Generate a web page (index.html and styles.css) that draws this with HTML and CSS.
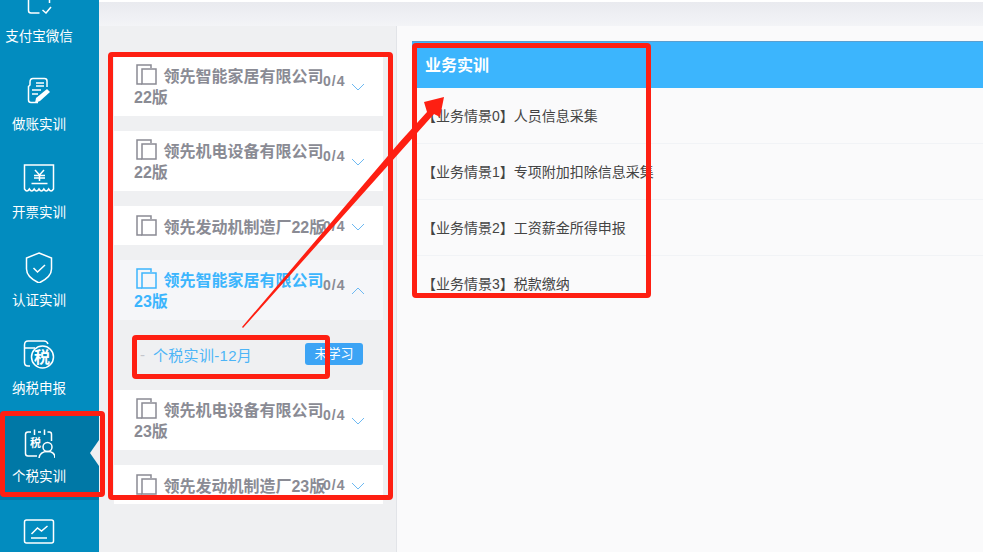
FILE: index.html
```html
<!DOCTYPE html>
<html lang="zh-CN">

<head>
    <meta charset="UTF-8">
    <title>个税实训</title>
    <link rel="stylesheet" href="styles.css">
</head>

<body>
    <div class="app">
        <nav class="side-nav">
            <div class="nav-item nav-first">
                <svg class="nav-icon" viewBox="0 0 32 32"><path d="M5.500 0v28.500q0 2.500 2.500 2.500h8.500M26.500 16v5M19.500 28l3.500 3 5-6"/></svg>
                <span>支付宝微信</span>
            </div>
            <div class="nav-item">
                <svg class="nav-icon" viewBox="0 0 32 32"><path d="M24 12V6q0-2.500-2.500-2.500H10Q7 3.500 7 7v3l-1.500 1.500V25q0 2.500 2.500 2.500h7M13 8h8M13 11h8M9 15h9M9 19h6"/><path class="solid" d="M24 14l3 3-10 9-5 2 1-5z"/></svg>
                <span>做账实训</span>
            </div>
            <div class="nav-item">
                <svg class="nav-icon" viewBox="0 0 32 32"><path d="M1.500 2h29v24q-2.400 4-4.830 0q-2.400 4-4.830 0q-2.400 4-4.830 0q-2.400 4-4.830 0q-2.400 4-4.830 0q-2.400 4-4.840 0zM12 7l4.500 5 4.500-5M11 12.500h11M11 15h11M16.500 12.500V18M8.500 20.500h16"/></svg>
                <span>开票实训</span>
            </div>
            <div class="nav-item">
                <svg class="nav-icon" viewBox="0 0 32 32"><path d="M16 2l12.500 5v11q0 8-12.500 14Q3.500 26 3.500 18V7zM10.500 17l4 4 7.500-7"/></svg>
                <span>认证实训</span>
            </div>
            <div class="nav-item">
                <svg class="nav-icon" viewBox="0 0 32 32"><path d="M7 27H5q-3.500 0-3.500-3.500V6Q1.500 2 5 2h16q3 0 4 3M2 9h10"/><circle cx="19.500" cy="18" r="11"/></svg>
                <b class="tax-glyph">税</b>
                <span>纳税申报</span>
            </div>
            <div class="nav-item nav-active">
                <svg class="nav-icon" viewBox="0 0 32 32"><path d="M14 29H5q-2.500 0-2.500-2.500V7.500Q2.500 5 5 5h3M15 5h3M24.500 5h2q2 0 2 2.500V14M11.500 2.500V8M21.500 2.500V8"/><circle cx="24.500" cy="20" r="4.500"/><path d="M16 31q1-6.500 8.500-6.500t7.500 6.500"/></svg>
                <b class="tax-glyph tax-small">税</b>
                <span>个税实训</span>
            </div>
            <div class="nav-item">
                <svg class="nav-icon" viewBox="0 0 32 32"><path d="M3.500 5h25q2 0 2 2v19q0 2-2 2h-25q-2 0-2-2V7q0-2 2-2zM8 23h16M8.500 19l6-6 4 3 6-5"/></svg>
            </div>
        </nav>

        <div class="main">
            <div class="top-bar"></div>
            <div class="work">
                <section class="course-list">
                    <div class="course">
                        <svg class="copy-icon" viewBox="0 0 21 21"><path d="M6 20H1V1h14v3"/><path d="M6 5h14v15H6z"/></svg>
                        <span class="course-name">领先智能家居有限公司22版</span>
                        <span class="course-count">0/4</span>
                        <svg class="chevron" viewBox="0 0 14 8"><path d="M1 1l6 6 6-6"/></svg>
                    </div>
                    <div class="course">
                        <svg class="copy-icon" viewBox="0 0 21 21"><path d="M6 20H1V1h14v3"/><path d="M6 5h14v15H6z"/></svg>
                        <span class="course-name">领先机电设备有限公司22版</span>
                        <span class="course-count">0/4</span>
                        <svg class="chevron" viewBox="0 0 14 8"><path d="M1 1l6 6 6-6"/></svg>
                    </div>
                    <div class="course course-short">
                        <svg class="copy-icon" viewBox="0 0 21 21"><path d="M6 20H1V1h14v3"/><path d="M6 5h14v15H6z"/></svg>
                        <span class="course-name">领先发动机制造厂22版</span>
                        <span class="course-count">0/4</span>
                        <svg class="chevron" viewBox="0 0 14 8"><path d="M1 1l6 6 6-6"/></svg>
                    </div>
                    <div class="course course-open">
                        <svg class="copy-icon" viewBox="0 0 21 21"><path d="M6 20H1V1h14v3"/><path d="M6 5h14v15H6z"/></svg>
                        <span class="course-name">领先智能家居有限公司23版</span>
                        <span class="course-count">0/4</span>
                        <svg class="chevron" viewBox="0 0 14 8"><path d="M1 7l6-6 6 6"/></svg>
                    </div>
                    <div class="sub-item">
                        <span class="sub-dash">-</span>
                        <span class="sub-name">个税实训-12月</span>
                        <span class="sub-tag">未学习</span>
                    </div>
                    <div class="course">
                        <svg class="copy-icon" viewBox="0 0 21 21"><path d="M6 20H1V1h14v3"/><path d="M6 5h14v15H6z"/></svg>
                        <span class="course-name">领先机电设备有限公司23版</span>
                        <span class="course-count">0/4</span>
                        <svg class="chevron" viewBox="0 0 14 8"><path d="M1 1l6 6 6-6"/></svg>
                    </div>
                    <div class="course course-short">
                        <svg class="copy-icon" viewBox="0 0 21 21"><path d="M6 20H1V1h14v3"/><path d="M6 5h14v15H6z"/></svg>
                        <span class="course-name">领先发动机制造厂23版</span>
                        <span class="course-count">0/4</span>
                        <svg class="chevron" viewBox="0 0 14 8"><path d="M1 1l6 6 6-6"/></svg>
                    </div>
                </section>

                <section class="task-panel">
                    <h2 class="task-title">业务实训</h2>
                    <div class="task-row">【业务情景0】人员信息采集</div>
                    <div class="task-row">【业务情景1】专项附加扣除信息采集</div>
                    <div class="task-row">【业务情景2】工资薪金所得申报</div>
                    <div class="task-row">【业务情景3】税款缴纳</div>
                </section>
            </div>
        </div>
    </div>

    <!-- red markup drawn over the screenshot -->
    <div class="mark mark-nav"></div>
    <div class="mark mark-list"></div>
    <div class="mark mark-sub"></div>
    <div class="mark mark-task"></div>
    <svg class="mark-arrow" viewBox="0 0 983 552">
        <polygon points="243,328 400,152 434,114 440,117 444,97 424,102 427,112 400,141.700 242,327"/>
    </svg>
</body>

</html>
```
FILE: styles.css
```css
* {
    box-sizing: border-box;
}

html,
body {
    height: 100%;
    margin: 0;
    overflow: hidden;
}

body {
    font-family: "Liberation Sans", "Noto Sans CJK SC", sans-serif;
    background: #fafafb;
}

.app {
    display: flex;
    height: 552px;
}

.side-nav {
    width: 99px;
    flex-shrink: 0;
    background: #028cbf;
    overflow: hidden;
}

.nav-item {
    position: relative;
    height: 88px;
    padding: 15px 21px 0 0;
    display: flex;
    flex-direction: column;
    align-items: center;
    color: #fff;
    font-size: 13.500px;
    line-height: 18px;
}

.nav-first {
    height: 60px;
    padding-top: 0;
}

.nav-first .nav-icon {
    margin-top: -18px;
    margin-bottom: 14px;
}

.nav-active {
    background: #0078a6;
}

.nav-active::after {
    content: "";
    position: absolute;
    right: 0;
    top: 28px;
    border-style: solid;
    border-width: 13px 9px 13px 0;
    border-color: transparent #eff0f2 transparent transparent;
}

.nav-icon {
    width: 32px;
    height: 32px;
    flex-shrink: 0;
    margin-bottom: 9px;
    fill: none;
    stroke: #fff;
    stroke-width: 1.500;
}

.nav-icon .solid {
    fill: #fff;
    stroke: none;
}

.tax-glyph {
    position: absolute;
    left: 34px;
    top: 24px;
    font-size: 16px;
    line-height: 20px;
}

.tax-small {
    left: 30px;
    top: 21px;
    font-size: 11px;
}

.main {
    flex: 1;
    display: flex;
    flex-direction: column;
    min-width: 0;
}

.top-bar {
    height: 26px;
    flex-shrink: 0;
    background: linear-gradient(#e9eaef, #f3f4f7);
    border-top: 2px solid #fff;
}

.work {
    flex: 1;
    display: flex;
    min-height: 0;
}

.course-list {
    width: 298px;
    flex-shrink: 0;
    padding: 30px 13px 0 15px;
    background: #eff0f2;
    border-right: 1px solid #e2e4e8;
    overflow: hidden;
}

.course {
    position: relative;
    height: 60px;
    margin-bottom: 15px;
    padding: 8px 48px 0 20px;
    background: #fff;
    color: #8a8b94;
    font-size: 16px;
    font-weight: bold;
    line-height: 21px;
}

.course-short {
    height: 39px;
    padding-top: 9px;
}

.course-open {
    background: #f5f6f9;
    color: #3cb5fd;
    margin-bottom: 0;
}

.copy-icon {
    width: 21px;
    height: 21px;
    margin: 0 2px 0 2px;
    vertical-align: -3px;
    fill: none;
    stroke: #8a8b94;
    stroke-width: 1.500;
}

.course-open .copy-icon {
    stroke: #3cb5fd;
}

.course-count {
    position: absolute;
    left: 209px;
    top: 15px;
    color: #8a8b94;
    font-size: 14px;
    letter-spacing: 1px;
}

.chevron {
    position: absolute;
    left: 237px;
    top: 27px;
    width: 14px;
    height: 8px;
    fill: none;
    stroke: #6db9f2;
    stroke-width: 1;
}

.course-short .chevron {
    top: 17px;
}

.course-short .course-count {
    top: 10px;
}

.sub-item {
    height: 70px;
    display: flex;
    align-items: center;
    padding: 0 20px 2px 26px;
    font-size: 15px;
}

.sub-dash {
    width: 13px;
    color: #c4c6cc;
}

.sub-name {
    flex: 1;
    color: #4db5f7;
    letter-spacing: .3px;
}

.sub-tag {
    width: 58px;
    height: 22px;
    border-radius: 3px;
    background: #3ca4f5;
    color: #fff;
    font-size: 13px;
    line-height: 22px;
    text-align: center;
}

.task-panel {
    flex: 1;
    padding: 15px 0 0 15px;
    min-width: 0;
}

.task-title {
    height: 47px;
    margin: 0;
    padding-left: 13px;
    background: #3cb5fd;
    border-top: 1px solid #5a9fd0;
    color: #fff;
    font-size: 16px;
    font-weight: bold;
    line-height: 48px;
}

.task-row {
    height: 56px;
    padding-left: 10px;
    border-bottom: 1px solid #f1f3f6;
    color: #444;
    font-size: 14px;
    line-height: 56px;
}

.task-row:last-child {
    border-bottom: none;
}

.mark {
    position: absolute;
    border: 5px solid #fe1f12;
    border-radius: 4px;
}

.mark-nav {
    left: 0;
    top: 411px;
    width: 105px;
    height: 86px;
}

.mark-list {
    left: 108px;
    top: 52px;
    width: 285px;
    height: 448px;
}

.mark-sub {
    left: 132px;
    top: 335px;
    width: 198px;
    height: 44px;
}

.mark-task {
    left: 412px;
    top: 43px;
    width: 239px;
    height: 255px;
}

.mark-arrow {
    position: absolute;
    left: 0;
    top: 0;
    width: 983px;
    height: 552px;
    fill: #fe1f12;
}
```
